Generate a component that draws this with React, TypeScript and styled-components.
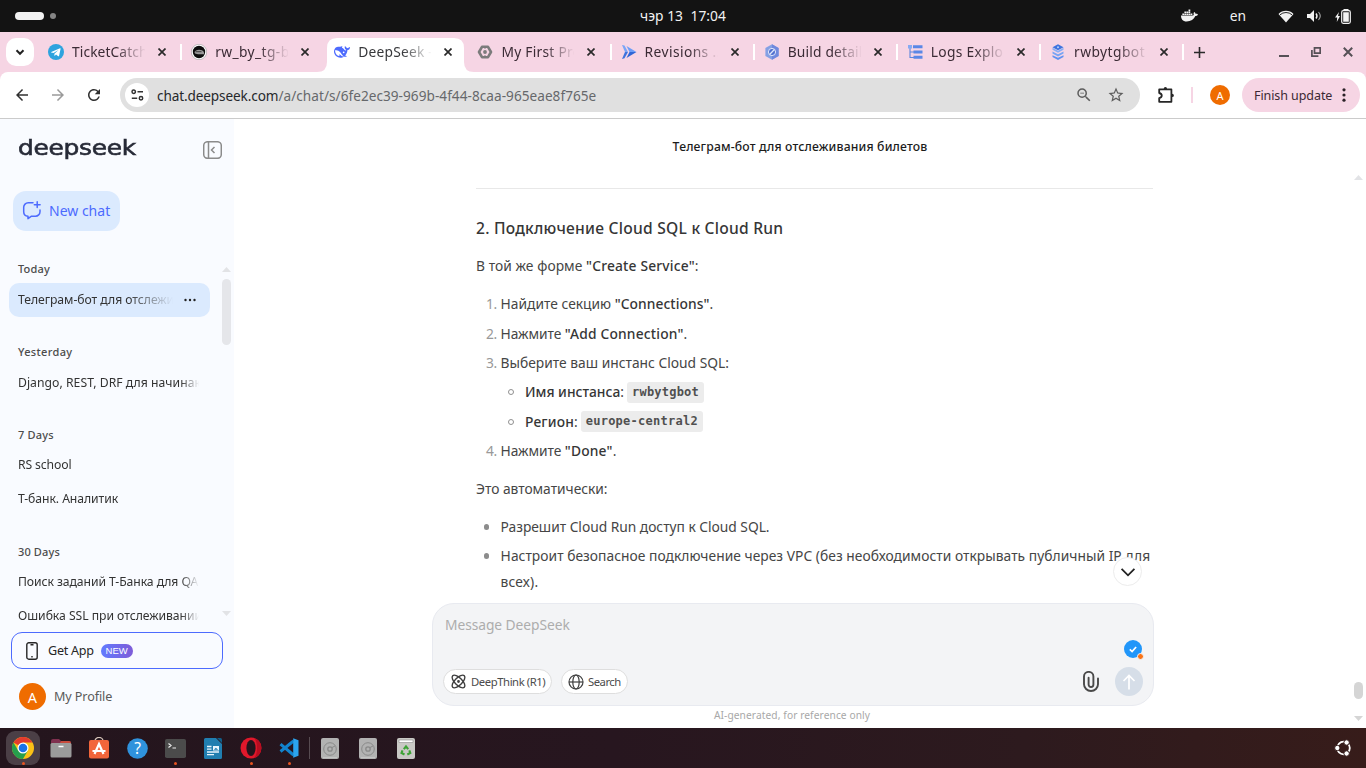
import React, { useLayoutEffect, useRef } from "react";
import styled, { createGlobalStyle, css } from "styled-components";
import { FaDocker } from "react-icons/fa";
import { Atom } from "lucide-react";
import {
  MdArrowBack,
  MdArrowForward,
  MdRefresh,
  MdStarOutline,
  MdZoomOut,
} from "react-icons/md";

const GlobalStyle = createGlobalStyle`
  *, *::before, *::after { box-sizing: border-box; }
  html, body { margin: 0; padding: 0; }
  body {
    width: 1366px; height: 768px; overflow: hidden;
    font-family: "Noto Sans", "Open Sans", sans-serif;
    background: #fff; color: #404040;
  }
  svg { display: block; flex: none; }
`;

/* Inline text whose tracking is adjusted so that it fills a given width. */
const FitSpan = styled.span`
  display: inline-block;
  white-space: pre;
`;
function Fit({ w, children }: { w: number; children: string }) {
  const ref = useRef<HTMLSpanElement>(null);
  useLayoutEffect(() => {
    const el = ref.current;
    if (!el) return;
    el.style.letterSpacing = "0px";
    const natural = el.offsetWidth;
    el.style.letterSpacing = `${(w - natural) / children.length}px`;
  }, [w, children]);
  return <FitSpan ref={ref}>{children}</FitSpan>;
}

const Screen = styled.div`
  width: 1366px; height: 768px;
  display: flex; flex-direction: column;
  overflow: hidden;
`;

/* ---------- system bar ---------- */
const SystemBar = styled.header`
  height: 32px; flex: none; padding-bottom: 1px;
  background: #131313; color: #f2f2f2;
  display: grid; grid-template-columns: 1fr auto 1fr;
  align-items: center;
  font-size: 13.8px;
`;
const Workspaces = styled.div`display: flex; align-items: center; gap: 6px; padding: 1px 0 0 15px;`;
const Pill = styled.i`width: 29px; height: 8px; border-radius: 4px; background: #f2f2f2;`;
const Dot = styled.i`width: 6px; height: 6px; border-radius: 50%; background: #858585;`;
const Tray = styled.div`display: flex; align-items: center; justify-content: flex-end; padding-right: 15px;`;
const Lang = styled.span`margin: 0 32px 0 32px;`;
const TrayIcons = styled.div`display: flex; align-items: center; gap: 13px; padding-top: 1px;`;

/* ---------- tab strip ---------- */
const TabStrip = styled.div`
  height: 40px; flex: none; background: #f6d5e4;
  display: flex; align-items: center;
`;
const TabSearch = styled.button`
  width: 28px; height: 28px; margin: 0 7px 0 6px; padding: 0;
  border: 0; border-radius: 10px; background: #fff;
  display: flex; align-items: center; justify-content: center;
`;
const Tab = styled.div<{ $active?: boolean; $sep?: boolean }>`
  position: relative;
  width: 143.15px; height: 40px; flex: none;
  display: flex; align-items: center;
  padding-left: 7px;
  color: #3b2b35; font-size: 13.8px;
  ${(p) => p.$sep && css`
    &::after { content: ""; position: absolute; right: 2px; top: 12px; width: 2px; height: 16px; background: #fff; }
  `}
  ${(p) => p.$active && css`color: #37383b;`}
`;
const ActiveShape = styled.svg`position: absolute; left: -10px; top: 6px;`;
const Favicon = styled.span`position: relative; width: 16px; height: 16px; display: flex; justify-content: center; align-items: center;`;
const TabTitle = styled.span`
  position: relative; top: -1px;
  width: 73px; margin-left: 8px; overflow: hidden; white-space: nowrap;
  mask-image: linear-gradient(90deg, #000 44px, transparent 74px);
`;
const CloseMark = styled.svg`position: relative; margin-left: 13px;`;
const NewTab = styled.div`margin-left: 8px; flex: 1;`;
const WindowButtons = styled.div`display: flex; align-items: center; gap: 22px; padding-right: 13px;`;

/* ---------- toolbar ---------- */
const ToolbarBack = styled.div`background: #f6d5e4; flex: none;`;
const Toolbar = styled.div`
  height: 47px; background: #fff; border-bottom: 1px solid #cbcbcb;
  border-radius: 8px 8px 0 0;
  display: flex; align-items: center;
  padding: 0 6px 0 13px; color: #303030;
`;
const NavButtons = styled.div`display: flex; gap: 18px; width: 107px;`;
const AddressBar = styled.div`
  width: 1020px; height: 34px; border-radius: 17px; background: #e0e0e0;
  display: flex; align-items: center; padding: 0 15px 0 5px;
  font-size: 13.6px; color: #66686b;
`;
const SiteInfo = styled.div`
  width: 24px; height: 24px; border-radius: 50%; background: #fff;
  display: flex; align-items: center; justify-content: center; margin-right: 8px;
`;
const Host = styled.span`color: #26282b;`;
const Spacer = styled.div`flex: 1;`;
const BarIcons = styled.div`display: flex; gap: 14px; color: #5d5d5d;`;
const Divider = styled.i`width: 2px; height: 16px; background: #f6d5e4; margin: 0 17px 0 16px;`;
const Extension = styled.div`margin-left: 18px;`;
const Avatar = styled.div<{ $size: number }>`
  width: ${(p) => p.$size}px; height: ${(p) => p.$size}px; border-radius: 50%;
  background: #ef6c00; color: #fff; flex: none;
  font-size: ${(p) => p.$size / 2 + 1}px;
  display: flex; align-items: center; justify-content: center;
`;
const UpdateButton = styled.button`
  margin-left: 12px; height: 34px; width: 118px; border: 0; border-radius: 17px;
  background: #f6d5e4; color: #3b2933; font: 12.5px "Noto Sans", sans-serif;
  display: flex; align-items: center; justify-content: space-between; padding: 0 14px 0 12px;
`;

/* ---------- page ---------- */
const Page = styled.div`flex: 1; min-height: 0; display: flex;`;
const Sidebar = styled.aside`
  width: 234px; flex: none; background: #f9fbff;
  display: flex; flex-direction: column;
`;
const SideHead = styled.div`
  height: 60px; display: flex; align-items: center; justify-content: space-between;
  padding: 1px 12px 0 18px;
`;
const Logo = styled.div`
  width: 118px; white-space: nowrap;
  font: 22px/26px "DejaVu Sans", sans-serif; color: #272a37;
  -webkit-text-stroke: 0.6px #272a37; margin-top: -3px;
  transform: scaleX(1.13); transform-origin: 0 50%;
`;
const NewChat = styled.button`
  margin: 12px 0 24px 13px; width: 107px; height: 40px; flex: none;
  border: 0; border-radius: 13px; background: #dbeafe; color: #4d6bfe;
  font: 14px "Noto Sans", sans-serif; padding: 0 8px 1px 9px;
  display: flex; align-items: center; gap: 7px;
`;
const HistoryWrap = styled.div`height: 368px; display: flex; overflow: hidden;`;
const History = styled.div`width: 222px; padding-left: 9px; display: flex; flex-direction: column; gap: 21px;`;
const Group = styled.div`width: 201px;`;
const GroupLabel = styled.div`
  height: 28px; line-height: 27px; padding-left: 9px;
  font-size: 11px; font-weight: 500; color: #4c4c4c;
`;
const Item = styled.div<{ $active?: boolean; $up?: boolean }>`
  height: 34px; padding: 0 14px ${(p) => (p.$up ? 2 : 0)}px 9px; border-radius: 10px;
  display: flex; align-items: center; font-size: 12.2px; color: #333;
  background: ${(p) => (p.$active ? "#dbeafe" : "transparent")};
`;
const ItemText = styled.span<{ $w: number }>`
  width: ${(p) => p.$w}px; line-height: 20px; overflow: hidden; white-space: nowrap; flex: none;
  padding-bottom: 1px;
  mask-image: linear-gradient(90deg, #000 ${(p) => (p.$w < 160 ? p.$w - 45 : p.$w - 18)}px, transparent);
`;
const Scroll = styled.div`
  width: 9px; display: flex; flex-direction: column; align-items: center;
  padding: 12px 0 7px; gap: 7px;
`;
const Thumb = styled.i<{ $h: number; $c: string }>`
  width: 9px; height: ${(p) => p.$h}px; flex: none; border-radius: 4.5px; background: ${(p) => p.$c};
`;
const GetApp = styled.div`
  margin: 9px 0 0 11px; width: 212px; height: 37px; flex: none;
  border: 1px solid #4d6bfe; border-radius: 11px;
  display: flex; align-items: center; padding-left: 14px; font-size: 12.6px; color: #262626;
`;
const AppName = styled.span`margin: 0 7px 0 10px;`;
const NewBadge = styled.span`
  width: 32px; height: 14px; border-radius: 7px; color: #fff;
  background: linear-gradient(90deg, #617bff, #7e5cd8);
  font: 9.5px/14px "Liberation Sans", sans-serif; text-align: center;
`;
const Profile = styled.div`
  margin: 14px 0 0 19px; display: flex; align-items: center; gap: 8px;
  font-size: 12.6px; color: #5a5a5a;
`;

const Main = styled.main`flex: 1; display: flex; flex-direction: column; position: relative;`;
const ChatTitle = styled.h1`
  margin: 0; height: 53px; line-height: 53px; padding-top: 1px; text-align: center;
  font-size: 12.2px; font-weight: 500; color: #1c1c1c;
`;
const Conversation = styled.div`
  height: 426px; display: flex; justify-content: space-between; padding-right: 3px;
`;
const Message = styled.article`
  width: 677px; margin-left: 242px; padding-top: 16px;
  font-size: 13.8px; line-height: 25.7px; color: #454545;
`;
const Rule = styled.hr`height: 1px; border: 0; margin: 0 0 27px; background: #e8e8e8;`;
const Heading = styled.h3`
  margin: 0 0 11.4px; font-size: 15.6px; line-height: 25.7px; font-weight: 500; color: #363636;
`;
const Para = styled.p`margin: 0 0 12.4px;`;
const List = styled.div`
  display: flex; flex-direction: column; gap: 3.65px;
  margin-bottom: 12.4px;
`;
const Entry = styled.div<{ $nested?: boolean }>`
  display: grid; grid-template-columns: ${(p) => (p.$nested ? 49 : 24.6)}px 1fr;
`;
const Num = styled.span`color: #999; padding-left: 10px;`;
const Bullet = styled.i<{ $hollow?: boolean }>`
  width: ${(p) => (p.$hollow ? 6 : 5.5)}px; height: ${(p) => (p.$hollow ? 6 : 5.5)}px;
  border-radius: 50%; margin: 10px 0 0 ${(p) => (p.$hollow ? 32 : 7.5)}px;
  ${(p) => (p.$hollow ? css`border: 1px solid #909090;` : css`background: #8c8c8c;`)}
`;
const Strong = styled.strong`font-weight: 500; color: #363636;`;
const Code = styled.code`
  display: inline-block; background: #ececec; border-radius: 3px; line-height: 20px; height: 21px;
  padding: 0 5px; margin-left: 3px; vertical-align: middle; position: relative; top: -1px;
  font-family: "DejaVu Sans Mono", monospace; font-weight: 700; font-size: 12px; color: #505050;
`;
const ScrollRail = styled.div`width: 9px; padding-top: 3px;`;
const ScrollFoot = styled.div`
  position: absolute; right: 3px; top: 563px; width: 9px; height: 39px;
  display: flex; flex-direction: column; justify-content: space-between; align-items: center;
`;
const ToBottom = styled.button`
  position: absolute; left: 879px; top: 438px; width: 29px; height: 29px; padding: 0;
  border-radius: 50%; border: 1px solid #ececec; background: #fff;
  display: flex; align-items: center; justify-content: center;
`;
const Composer = styled.div`
  width: 722px; height: 103px; margin: 5px 0 0 198px; flex: none; position: relative;
  border: 1px solid #e8eaf0; border-radius: 22px; background: #f3f4f6;
  padding: 10px 10px 9px 10px; display: flex; flex-direction: column; justify-content: space-between;
`;
const Placeholder = styled.div`font-size: 13.8px; line-height: 24px; color: #adadad; padding-left: 2px; margin-top: -1px;`;
const Actions = styled.div`display: flex; align-items: center; height: 29px;`;
const Chip = styled.button<{ $w: number }>`
  width: ${(p) => p.$w}px; height: 25px; margin-right: 9px; padding: 0 7px 1px 6px; white-space: nowrap;
  border: 1px solid #dedede; border-radius: 13px; background: #fff; color: #4c4c4c;
  display: flex; align-items: center; gap: 4px; font: 11.3px "Noto Sans", sans-serif;
  svg { position: relative; top: 0.5px; }
`;
const Send = styled.div`
  width: 28px; height: 29px; border-radius: 50%; background: #d6dee8; margin-left: 16px;
  display: flex; align-items: center; justify-content: center;
`;
const Checker = styled.svg`position: absolute; right: 9px; top: 36px;`;
const Footnote = styled.div`
  width: 722px; margin: 2px 0 0 197px; text-align: center; font-size: 10.2px; line-height: 15px; color: #a8a8a8;
`;

/* ---------- dock ---------- */
const Dock = styled.footer`
  height: 40px; flex: none; padding: 0 14px 0 4px;
  background: linear-gradient(90deg, #24151d 0%, #27161f 45%, #2d1a1e 75%, #371c1a 100%);
  display: flex; align-items: center;
`;
const DockCell = styled.div<{ $active?: boolean; $running?: boolean }>`
  position: relative; width: 38px; height: 40px; display: flex; align-items: center; justify-content: center;
  ${(p) => p.$active && css`
    &::before { content: ""; position: absolute; left: 2px; top: 3px; width: 34px; height: 34px; border-radius: 9px; background: #4b3f46; }
  `}
  ${(p) => p.$running && css`
    &::after { content: ""; position: absolute; left: 17.5px; top: 34px; width: 3px; height: 3px; border-radius: 50%; background: #e95420; }
  `}
  svg { position: relative; }
`;
const DockLine = styled.i`width: 1px; height: 22px; background: #574b51; margin: 0 1px;`;

/* ---------- drawings ---------- */
const Chevron = ({ size = 12, w = 2, c = "#222" }) => (
  <svg width={size} height={size} viewBox="0 0 12 12" fill="none" stroke={c} strokeWidth={w}>
    <path d="M2.5 4.3 6 7.8 9.5 4.3" />
  </svg>
);
const Arrow = ({ up, c = "#e2e3e6" }: { up?: boolean; c?: string }) => (
  <svg width="9" height="5" viewBox="0 0 9 5" fill={c}>
    <path d={up ? "M0 5 4.5 0 9 5z" : "M0 0 4.5 5 9 0z"} />
  </svg>
);
const Close = () => (
  <CloseMark width="8" height="8" viewBox="0 0 8 8" stroke="#2a2a2a" strokeWidth="1.7">
    <path d="M.5.5 7.5 7.5M7.5.5.5 7.5" />
  </CloseMark>
);
const Telegram = () => (
  <svg width="16" height="16" viewBox="0 0 16 16">
    <circle cx="8" cy="8" r="8" fill="#2ea3de" />
    <path d="M3.2 7.9 12 4.2c.5-.2.7.1.6.6l-1.5 7c-.1.5-.5.6-.9.4L8 10.600l-1.100 1.100c-.2.2-.5.2-.5-.1V9.800L10.500 6 5.500 9.100 3.300 8.400c-.4-.1-.4-.4-.1-.5z" fill="#fff" />
  </svg>
);
const RoundTrain = () => (
  <svg width="16" height="16" viewBox="0 0 16 16">
    <circle cx="8" cy="8" r="7.700" fill="#fff" stroke="#8b8b8b" strokeWidth=".5" />
    <circle cx="8" cy="8" r="6.200" fill="#0d0d0d" />
    <path d="M3.500 8.200C4 5.800 8 5 11 6.200c1.600.8 2.200 2 2.200 4.100H7L4 9.500z" fill="#9a9a9a" />
    <path d="M4.500 7.700h6" stroke="#333" strokeWidth=".9" />
  </svg>
);
const Whale = () => (
  <svg width="16" height="16" viewBox="0 0 24 24" fill="#4d6bfe">
    <path fillRule="evenodd" d="M23.748 4.482c-.254-.124-.364.113-.512.234-.051.039-.094.09-.137.136-.372.397-.806.657-1.373.626-.829-.046-1.537.214-2.163.848-.133-.782-.575-1.248-1.247-1.548-.352-.156-.708-.311-.955-.65-.172-.241-.219-.51-.305-.774-.055-.16-.11-.323-.293-.35-.2-.031-.278.136-.356.276-.313.572-.434 1.202-.422 1.84.027 1.436.633 2.58 1.838 3.393.137.093.172.187.129.323-.082.28-.18.552-.266.833-.055.179-.137.217-.329.14a5.526 5.526 0 01-1.736-1.18c-.857-.828-1.631-1.742-2.597-2.458a11.365 11.365 0 00-.689-.471c-.985-.957.13-1.743.388-1.836.27-.098.093-.432-.779-.428-.872.004-1.67.295-2.687.684a3.055 3.055 0 01-.465.137 9.597 9.597 0 00-2.883-.102c-1.885.21-3.39 1.102-4.497 2.623C.082 8.606-.231 10.684.152 12.85c.403 2.284 1.569 4.175 3.36 5.653 1.858 1.533 3.997 2.284 6.438 2.14 1.482-.085 3.133-.284 4.994-1.86.47.234.962.327 1.78.397.63.059 1.236-.03 1.705-.128.735-.156.684-.837.419-.961-2.155-1.004-1.682-.595-2.113-.926 1.096-1.296 2.746-2.642 3.392-7.003.05-.347.007-.565 0-.845-.004-.17.035-.237.23-.256a4.173 4.173 0 001.545-.475c1.396-.763 1.96-2.015 2.093-3.517.02-.23-.004-.467-.247-.588zM11.581 18c-2.089-1.642-3.102-2.183-3.52-2.16-.392.024-.321.471-.235.763.09.288.207.486.371.739.114.167.192.416-.113.603-.673.416-1.842-.14-1.897-.167-1.361-.802-2.5-1.86-3.301-3.307-.774-1.393-1.224-2.887-1.298-4.482-.02-.386.093-.522.477-.592a4.696 4.696 0 011.529-.039c2.132.312 3.946 1.265 5.468 2.774.868.86 1.525 1.887 2.202 2.891.72 1.066 1.494 2.082 2.48 2.914.348.292.625.514.891.677-.802.09-2.14.11-3.054-.614z" />
    <circle cx="14.500" cy="12.500" r="1.300" fill="#fff" />
  </svg>
);
const HexGear = () => (
  <svg width="16" height="16" viewBox="0 0 16 16" fill="none" stroke="#7b7b7b">
    <path d="M5 2.800h6L14 8l-3 5.200H5L2 8z" strokeWidth="2.600" strokeLinejoin="round" />
    <circle cx="8" cy="8" r="1.900" fill="#7b7b7b" stroke="none" />
    <path d="M8 3v1.800M8 11.200V13" strokeWidth="1.200" />
  </svg>
);
const CloudRun = () => (
  <svg width="16" height="16" viewBox="0 0 16 16">
    <path d="M1 1 3.500 1.600 7 8H4z" fill="#7aa5f7" />
    <path d="M1 15 3.500 14.300 7 8H4z" fill="#3d73dd" />
    <path d="M5.500 2 15.500 8H8.500z" fill="#6c9df7" />
    <path d="M5.500 14 15.500 8H8.500z" fill="#2f66d6" />
  </svg>
);
const BuildHex = () => (
  <svg width="16" height="16" viewBox="0 0 16 16">
    <path d="M8 .3 14.600 4v8L8 15.700 1.400 12V4z" fill="#84a0e4" />
    <path d="M8 .3 14.600 4v8L8 15.700z" fill="#7088dd" />
    <circle cx="8" cy="8" r="3.600" fill="#5170cf" stroke="#dfe6fb" strokeWidth="1" />
    <path d="M5.600 10.500 10.400 5.500" stroke="#dfe6fb" strokeWidth="1.300" />
  </svg>
);
const Logs = () => (
  <svg width="16" height="16" viewBox="0 0 16 16">
    <path d="M3 3v10.500h4M3 8h4" fill="none" stroke="#5d86dd" strokeWidth="1.100" />
    <path d="M1 1h4v3.500H1z" fill="#86aaf3" />
    <path d="M6 1.200h9.500v3H6zM6.500 6.500h9v3h-9zM6.500 11.700h9v3h-9z" fill="#5a87e6" />
  </svg>
);
const SqlStack = () => (
  <svg width="16" height="16" viewBox="0 0 16 16">
    <path d="m2.500 11.300 5.500 2.500 5.500-2.500v1.800L8 16l-5.500-2.900z" fill="#5f91f0" />
    <path d="m2.500 7.500 5.500 2.700 5.500-2.700v2L8 12.400 2.500 9.500z" fill="#79a5f5" />
    <path d="M2.500 3.200 8 .3l5.500 2.900L8 6.200z" fill="#3d74df" />
    <path d="m2.500 3.800 5.500 3 5.500-3v2L8 8.700 2.500 5.800z" fill="#88aff6" />
    <circle cx="8" cy="3.200" r="1" fill="#b9cff9" />
  </svg>
);
const PuzzleIcon = () => (
  <svg width="17" height="18" viewBox="0 0 17 18" fill="none" stroke="#262626" strokeWidth="1.800" strokeLinejoin="round">
    <path d="M1.200 3.400h12.200v12.400H1.200V12.200c3.400-.8 3.400-4.400 0-5.200z" />
    <path d="M5.700 3a1.700 1.900 0 0 1 3.400 0zM14 7.700a1.900 1.700 0 0 1 0 3.400z" fill="#262626" stroke="none" />
  </svg>
);
const ClipIcon = () => (
  <svg width="16" height="21" viewBox="0 0 16 21" fill="none" stroke="#494949" strokeWidth="1.900" strokeLinecap="round">
    <path d="M15 7.500v5.800a7 6.700 0 0 1-14 0V5.500a4.700 4.600 0 0 1 9.400 0v8a2.400 2.500 0 0 1-4.800 0V6.800" />
  </svg>
);
const GlobeIcon = () => (
  <svg width="16" height="16" viewBox="0 0 16 16" fill="none" stroke="#3f3f3f" strokeWidth="1.200">
    <circle cx="8" cy="8" r="7" />
    <ellipse cx="8" cy="8" rx="3.200" ry="7" />
    <path d="M1 8h14" />
  </svg>
);
const Chrome = () => (
  <svg width="22" height="22" viewBox="0 0 22 22">
    <circle cx="11" cy="11" r="11" fill="#fbc116" />
    <path d="M11 11 1.500 5.500A11 11 0 0 1 20.530 5.500H11z" fill="#e33b2e" />
    <path d="M1.470 5.500A11 11 0 0 0 11 22l4.760-8.250L6.240 13.750z" fill="#269f4d" />
    <circle cx="11" cy="11" r="5.500" fill="#fff" />
    <circle cx="11" cy="11" r="4.300" fill="#1a73e8" />
  </svg>
);
const Files = () => (
  <svg width="22" height="20" viewBox="0 0 22 20">
    <path d="M1 3a2 2 0 0 1 2-2h6l2 2h8a2 2 0 0 1 2 2v4H1z" fill="#80304f" />
    <path d="M11 3h8a2 2 0 0 1 2 2v2H9z" fill="#c84b3c" />
    <rect x=".5" y="5" width="21" height="14.500" rx="1.500" fill="#9b9b9b" />
    <path d="M8.500 8.500h5" stroke="#fff" strokeWidth="1.500" />
  </svg>
);
const Store = () => (
  <svg width="22" height="22" viewBox="0 0 22 22">
    <path d="M7 4a4 3.600 0 0 1 8 0" fill="none" stroke="#d8c7bb" strokeWidth="1.200" />
    <rect x="1" y="3" width="20" height="18.500" rx="2" fill="#f2653a" />
    <path d="M6.500 17 11 7l4.500 10M4.500 14h13" fill="none" stroke="#fff" strokeWidth="2.200" />
  </svg>
);
const Help = () => (
  <svg width="21" height="21" viewBox="0 0 21 21">
    <circle cx="10.500" cy="10.500" r="10.300" fill="#2f92dc" />
    <text x="10.500" y="16" fill="#fff" fontSize="15.500" textAnchor="middle" fontFamily="Noto Sans, sans-serif">?</text>
  </svg>
);
const Terminal = () => (
  <svg width="21" height="19" viewBox="0 0 21 19">
    <rect width="21" height="19" rx="1.800" fill="#4b4b4b" />
    <path d="m3.500 4.500 2.500 2-2.500 2M7.500 9H11" fill="none" stroke="#eee" strokeWidth="1.200" />
  </svg>
);
const Writer = () => (
  <svg width="18" height="21" viewBox="0 0 18 21">
    <path d="M1.500 0H12l6 6v13.500a1.500 1.500 0 0 1-1.500 1.500h-15A1.500 1.500 0 0 1 0 19.500v-18A1.500 1.500 0 0 1 1.500 0z" fill="#207eb0" />
    <path d="M13 0h3.500A1.500 1.500 0 0 1 18 1.500V5z" fill="#125f8a" />
    <path d="M3 8.500h4.500M3 11.200h4.500M3 14h12M3 16.700h7" stroke="#e7f5fd" strokeWidth="1.300" />
    <path d="M9 8h6v4.500H9z" fill="#e7f5fd" />
    <path d="m9.800 11.800 2-2 2.400 2z" fill="#207eb0" />
  </svg>
);
const Opera = () => (
  <svg width="22" height="22" viewBox="0 0 22 22">
    <circle cx="11" cy="11" r="10.500" fill="#e0182b" />
    <path d="M14 1a10.500 10.500 0 0 1 0 20c4-3 4-17 0-20z" fill="#b80d20" />
    <ellipse cx="11" cy="11" rx="4.600" ry="8" fill="#24151d" />
  </svg>
);
const CodeEditor = () => (
  <svg width="20" height="20" viewBox="0 0 20 20">
    <path d="M1.500 6.200 14.500 17M1.500 13.500 14.500 3" stroke="#1283cd" strokeWidth="3" />
    <path d="M14.200.3 19.500 2.300v15.400l-5.300 2z" fill="#2ba4ee" />
  </svg>
);
const Disk = () => (
  <svg width="18" height="21" viewBox="0 0 18 21">
    <rect width="18" height="21" rx="2" fill="#b2b2b2" />
    <circle cx="9" cy="11" r="6.300" fill="none" stroke="#898989" strokeWidth="1" />
    <circle cx="9" cy="11" r="2.200" fill="none" stroke="#898989" strokeWidth="1.300" />
    <path d="M14 8l-3 1.500" stroke="#898989" />
    <path d="M2 19.500h14" stroke="#c4c4c4" />
  </svg>
);
const Trash = () => (
  <svg width="18" height="21" viewBox="0 0 18 21">
    <rect width="18" height="21" rx="2" fill="#c9c9c5" />
    <path d="M2 2h14v2.500H2z" fill="#fff" stroke="#8c8c8c" strokeWidth=".6" />
    <path d="M6.800 11.200 9 8.500l2.200 2.700M12.300 12.300l1 2.700-3 1.500M7.500 16.500l-3-1.500 1-2.700" fill="none" stroke="#3da336" strokeWidth="2.100" />
  </svg>
);
const UbuntuMark = () => (
  <svg width="18" height="18" viewBox="0 0 18 18">
    <circle cx="9.500" cy="9" r="6.300" fill="none" stroke="#fff" strokeWidth="1.800" />
    <g fill="#fff" stroke="#351c1b" strokeWidth="1">
      <circle cx="3.300" cy="9" r="2.700" />
      <circle cx="12.600" cy="3.500" r="2.700" />
      <circle cx="12.600" cy="14.500" r="2.700" />
    </g>
  </svg>
);

const tabs: { t: string; w: number; icon: React.ReactNode; active?: boolean; sep?: boolean }[] = [
  { t: "TicketCatch", w: 76, icon: <Telegram />, sep: true },
  { t: "rw_by_tg-b", w: 74, icon: <RoundTrain /> },
  { t: "DeepSeek -", w: 75, icon: <Whale />, active: true },
  { t: "My First Pro", w: 80, icon: <HexGear />, sep: true },
  { t: "Revisions ..", w: 76, icon: <CloudRun />, sep: true },
  { t: "Build detail", w: 75, icon: <BuildHex />, sep: true },
  { t: "Logs Explor", w: 78, icon: <Logs />, sep: true },
  { t: "rwbytgbot", w: 71, icon: <SqlStack />, sep: true },
];

const history: { label: string; lw: number; items: { t: string; w: number; active?: boolean; up?: boolean }[] }[] = [
  { label: "Today", lw: 32, items: [{ t: "Телеграм-бот для отслежи", w: 156, active: true }] },
  { label: "Yesterday", lw: 54, items: [{ t: "Django, REST, DRF для начинаю", w: 186 }] },
  { label: "7 Days", lw: 36, items: [{ t: "RS school", w: 54, up: true }, { t: "Т-банк. Аналитик", w: 100, up: true }] },
  { label: "30 Days", lw: 42, items: [{ t: "Поиск заданий Т-Банка для QA", w: 180, up: true }, { t: "Ошибка SSL при отслеживании", w: 184, up: true }] },
];

export default function App() {
  return (
    <Screen>
      <GlobalStyle />
      <SystemBar>
        <Workspaces><Pill /><Dot /></Workspaces>
        <Fit w={86}>чэр 13  17:04</Fit>
        <Tray>
          <FaDocker size={17} />
          <Lang><Fit w={16}>en</Fit></Lang>
          <TrayIcons>
            <svg width="16" height="13" viewBox="0 0 16 13">
              <path d="M.5 4a10.500 10.500 0 0 1 15 0L8 12.500z" fill="#f2f2f2" />
              <path d="M2 4.800a9 9 0 0 1 12 0" stroke="#131313" strokeWidth=".9" fill="none" />
            </svg>
            <svg width="15" height="12" viewBox="0 0 15 12" fill="none" stroke="#f2f2f2">
              <path d="M0 4h3l4-4v12L3 8H0z" fill="#f2f2f2" stroke="none" />
              <path d="M9 3.500q2 2.500 0 5" strokeWidth="1.400" />
              <path d="M11.500 2q3.500 4 0 8" stroke="#a7a7a7" strokeWidth="1.100" />
            </svg>
            <svg width="16" height="15" viewBox="0 0 16 15">
              <path d="M4 3 0 8.500h2.200L1.800 13 5 7H3z" fill="#f2f2f2" />
              <rect x="6.700" y="1.700" width="8.600" height="12.600" rx="1.500" fill="none" stroke="#f2f2f2" strokeWidth="1.200" />
              <path d="M8.500 0h5v1.500h-5zM8.200 3.200h5.600v9.600H8.200z" fill="#f2f2f2" />
            </svg>
          </TrayIcons>
        </Tray>
      </SystemBar>

      <TabStrip>
        <TabSearch><Chevron /></TabSearch>
        {tabs.map((tab) => (
          <Tab key={tab.t} $active={tab.active} $sep={tab.sep}>
            {tab.active && (
              <ActiveShape width="158" height="34" viewBox="0 0 158 34" fill="#fff">
                <path d="M0 34q10 0 10-10V10Q10 0 20 0h117q10 0 10 10v14q0 10 10 10z" />
              </ActiveShape>
            )}
            <Favicon>{tab.icon}</Favicon>
            <TabTitle><Fit w={tab.w}>{tab.t}</Fit></TabTitle>
            <Close />
          </Tab>
        ))}
        <NewTab>
          <svg width="11" height="11" viewBox="0 0 11 11" stroke="#2a2a2a" strokeWidth="1.600"><path d="M5.500 0v11M0 5.500h11" /></svg>
        </NewTab>
        <WindowButtons>
          <svg width="10" height="10" viewBox="0 0 10 10"><path d="M0 8h10v2H0z" fill="#565056" /></svg>
          <svg width="10" height="10" viewBox="0 0 10 10" fill="none" stroke="#565056" strokeWidth="1.700"><path d="M3.500.9h5.700v5.300H3.500zM.9 3v6.100h6.500" /></svg>
          <svg width="10" height="10" viewBox="0 0 10 10" stroke="#565056" strokeWidth="2"><path d="M.8.8 9.200 9.200M9.200.8.8 9.200" /></svg>
        </WindowButtons>
      </TabStrip>

      <ToolbarBack>
        <Toolbar>
          <NavButtons>
            <MdArrowBack size={18} /><MdArrowForward size={18} color="#9a9a9a" /><MdRefresh size={18} />
          </NavButtons>
          <AddressBar>
            <SiteInfo>
              <svg width="13" height="12" viewBox="0 0 13 12" fill="none" stroke="#333" strokeWidth="1.500">
                <circle cx="2.700" cy="2.700" r="1.700" /><path d="M6.500 2.700H12M.8 9.200h5.400" /><circle cx="10" cy="9.200" r="1.700" />
              </svg>
            </SiteInfo>
            <Host><Fit w={121}>chat.deepseek.com</Fit></Host>
            <Fit w={318}>/a/chat/s/6fe2ec39-969b-4f44-8caa-965eae8f765e</Fit>
            <Spacer />
            <BarIcons><MdZoomOut size={18} /><MdStarOutline size={18} /></BarIcons>
          </AddressBar>
          <Extension><PuzzleIcon /></Extension>
          <Divider />
          <Avatar $size={20}>A</Avatar>
          <UpdateButton>
            <Fit w={78}>Finish update</Fit>
            <svg width="4" height="14" viewBox="0 0 4 14" fill="#2a2026"><circle cx="2" cy="1.800" r="1.600" /><circle cx="2" cy="7" r="1.600" /><circle cx="2" cy="12.200" r="1.600" /></svg>
          </UpdateButton>
        </Toolbar>
      </ToolbarBack>

      <Page>
        <Sidebar>
          <SideHead>
            <Logo><Fit w={104}>deepseek</Fit></Logo>
            <svg width="19" height="18" viewBox="0 0 19 18" fill="none" stroke="#8b8b8b" strokeWidth="1.500">
              <rect x=".7" y=".7" width="17.600" height="16.600" rx="4" /><path d="M5.500 1v16M11.500 6 8.500 9l3 3" />
            </svg>
          </SideHead>
          <NewChat>
            <svg width="20" height="19" viewBox="0 0 20 19" fill="none" stroke="#4d6bfe" strokeWidth="1.500" strokeLinecap="round" strokeLinejoin="round">
              <path d="M11 1.800H6.200A4.500 4.500 0 0 0 1.700 6.300v4.400c0 2.500 1.800 4.300 4.300 4.500v2.500l3.500-2.500h4A4.500 4.500 0 0 0 18 10.700V9" />
              <path d="M15.200.8v5.800M12.300 3.700h5.800" />
            </svg>
            <Fit w={61}>New chat</Fit>
          </NewChat>
          <HistoryWrap>
            <History>
              {history.map((g) => (
                <Group key={g.label}>
                  <GroupLabel><Fit w={g.lw}>{g.label}</Fit></GroupLabel>
                  {g.items.map((it) => (
                    <Item key={it.t} $active={it.active} $up={it.up}>
                      <ItemText $w={it.active ? 155 : 181}><Fit w={it.w}>{it.t}</Fit></ItemText>
                      {it.active && (
                        <>
                          <Spacer />
                          <svg width="12" height="4" viewBox="0 0 12 4" fill="#222"><circle cx="1.500" cy="2" r="1.200" /><circle cx="6" cy="2" r="1.200" /><circle cx="10.500" cy="2" r="1.200" /></svg>
                        </>
                      )}
                    </Item>
                  ))}
                </Group>
              ))}
            </History>
            <Scroll>
              <Arrow up />
              <Thumb $h={66} $c="#e5e6ea" />
              <Spacer />
              <Arrow />
            </Scroll>
          </HistoryWrap>
          <GetApp>
            <svg width="12" height="18" viewBox="0 0 12 18" fill="none" stroke="#262626" strokeWidth="1.400">
              <rect x=".8" y=".8" width="10.400" height="16.400" rx="2" /><path d="M4.500 2.800h3M5.300 14.800h1.400" />
            </svg>
            <AppName><Fit w={46}>Get App</Fit></AppName>
            <NewBadge>NEW</NewBadge>
          </GetApp>
          <Profile><Avatar $size={27}>A</Avatar><Fit w={58}>My Profile</Fit></Profile>
        </Sidebar>

        <Main>
          <ChatTitle><Fit w={255}>Телеграм-бот для отслеживания билетов</Fit></ChatTitle>
          <Conversation>
            <Message>
              <Rule />
              <Heading><Fit w={307}>2. Подключение Cloud SQL к Cloud Run</Fit></Heading>
              <Para><Fit w={110}>В той же форме </Fit><Strong><Fit w={109}>"Create Service"</Fit></Strong>:</Para>
              <List>
                <Entry><Num><Fit w={11}>1.</Fit></Num><div><Fit w={114}>Найдите секцию </Fit><Strong><Fit w={95}>"Connections"</Fit></Strong>.</div></Entry>
                <Entry><Num><Fit w={11}>2.</Fit></Num><div><Fit w={64.500}>Нажмите </Fit><Strong><Fit w={119}>"Add Connection"</Fit></Strong>.</div></Entry>
                <Entry><Num><Fit w={11}>3.</Fit></Num><div><Fit w={228}>Выберите ваш инстанс Cloud SQL:</Fit></div></Entry>
                <Entry $nested><Bullet $hollow /><div><Strong><Fit w={95}>Имя инстанса</Fit></Strong>:<Code><Fit w={67}>rwbytgbot</Fit></Code></div></Entry>
                <Entry $nested><Bullet $hollow /><div><Strong><Fit w={49}>Регион</Fit></Strong>:<Code><Fit w={112}>europe-central2</Fit></Code></div></Entry>
                <Entry><Num><Fit w={11}>4.</Fit></Num><div><Fit w={64.500}>Нажмите </Fit><Strong><Fit w={48}>"Done"</Fit></Strong>.</div></Entry>
              </List>
              <Para><Fit w={131.500}>Это автоматически:</Fit></Para>
              <List>
                <Entry><Bullet /><div><Fit w={269}>Разрешит Cloud Run доступ к Cloud SQL.</Fit></div></Entry>
                <Entry><Bullet /><div><Fit w={650}>Настроит безопасное подключение через VPC (без необходимости открывать публичный IP для</Fit><br /><Fit w={38}>всех).</Fit></div></Entry>
              </List>
            </Message>
            <ScrollRail><Arrow up /></ScrollRail>
          </Conversation>
          <ToBottom><Chevron size={22} w={1} /></ToBottom>
          <ScrollFoot><Thumb $h={17} $c="#d5d5d5" /><Arrow c="#d5d5d5" /></ScrollFoot>
          <Composer>
            <Placeholder><Fit w={125}>Message DeepSeek</Fit></Placeholder>
            <Checker width="20" height="20" viewBox="0 0 20 20">
              <circle cx="9" cy="9" r="9" fill="#2196f9" />
              <path d="m5.800 9.300 2.300 2.200 4-4.500" fill="none" stroke="#fff" strokeWidth="1.700" />
              <circle cx="16.500" cy="16.500" r="3" fill="#f97316" stroke="#f3f4f6" strokeWidth="1" />
            </Checker>
            <Actions>
              <Chip $w={109}><Atom size={17} strokeWidth={2} color="#3f3f3f" /><Fit w={74}>DeepThink (R1)</Fit></Chip>
              <Chip $w={67}><GlobeIcon /><Fit w={33}>Search</Fit></Chip>
              <Spacer />
              <ClipIcon />
              <Send>
                <svg width="14" height="16" viewBox="0 0 14 16" fill="none" stroke="#fff" strokeWidth="1.700"><path d="M7 15.500V1.500M1.500 7 7 1.500 12.500 7" /></svg>
              </Send>
            </Actions>
          </Composer>
          <Footnote><Fit w={156}>AI-generated, for reference only</Fit></Footnote>
        </Main>
      </Page>

      <Dock>
        <DockCell $active $running><Chrome /></DockCell>
        <DockCell><Files /></DockCell>
        <DockCell><Store /></DockCell>
        <DockCell><Help /></DockCell>
        <DockCell $running><Terminal /></DockCell>
        <DockCell><Writer /></DockCell>
        <DockCell $running><Opera /></DockCell>
        <DockCell $running><CodeEditor /></DockCell>
        <DockLine />
        <DockCell><Disk /></DockCell>
        <DockCell><Disk /></DockCell>
        <DockCell><Trash /></DockCell>
        <Spacer />
        <UbuntuMark />
      </Dock>
    </Screen>
  );
}
